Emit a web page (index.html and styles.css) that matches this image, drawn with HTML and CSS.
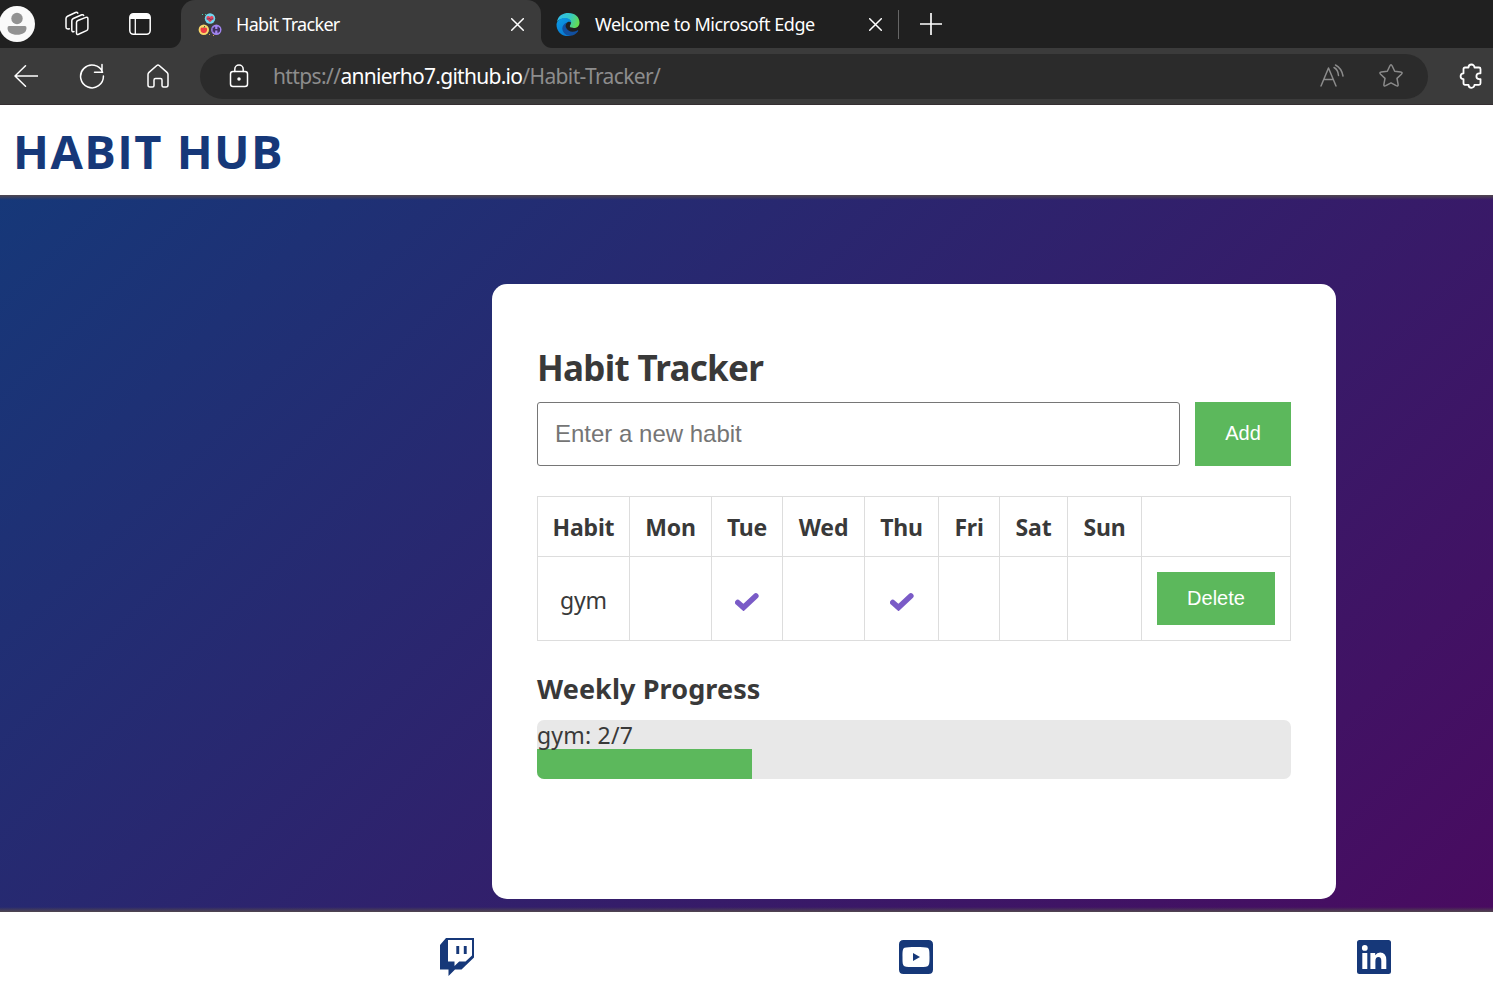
FILE: index.html
```html
<!DOCTYPE html>
<html lang="en">
<head>
<meta charset="utf-8">
<title>Habit Tracker</title>
<link rel="stylesheet" href="styles.css">
</head>
<body>
<div class="tabs">
  <div class="tabs-tools">
    <svg class="avatar" viewBox="0 0 36 36" width="36" height="36"><circle cx="18" cy="18" r="18" fill="#fafafa"/><circle cx="18" cy="12.5" r="5.7" fill="#929292"/><path d="M10 20h16q1.500 0 1.500 2c0 4.500-4 6.800-9.500 6.800S8.500 26.500 8.500 22q0-2 1.500-2z" fill="#929292"/></svg>
    <svg class="workspaces line" viewBox="0 0 26 26" width="26" height="26"><path d="M12.500 11.600q0-1.500 1.400-2.100l8-3.100q2-.7 2 1.400v9.600q0 1.500-1.400 2.200l-8 3.700q-2 .8-2-1.300zM10 20.500q-2.200.8-2.200-1.500V9.800q0-1.500 1.500-2.300l8.500-3.700q1.400-.5 1.900.7M5.300 17.800Q2 18.500 2 16V7.500Q2 6 3.500 5.300l8-3.800q1.600-.6 2.300.7"/></svg>
    <svg class="panel" viewBox="0 0 22 22" width="22" height="22"><rect x=".8" y=".8" width="20.400" height="20.400" rx="3.600" fill="none" stroke="#fff" stroke-width="1.500"/><path d="M1 6V4q0-3 3-3h14q3 0 3 3v2z" fill="#fff"/><path d="M6.300 6v15" stroke="#fff" stroke-width="1.300"/></svg>
  </div>
  <div class="tab tab-active">
    <svg viewBox="0 0 24 24" width="24" height="24"><circle cx="12" cy="6.500" r="5.200" fill="#71d7ef"/><path d="M12 10.300L8.700 7q-.8-3 1.600-3 1 0 1.700 1 .7-1 1.700-1 2.400 0 1.600 3z" fill="#e8435b"/><path d="M8.500 7h2l1-1 1 2 1-1h2" stroke="#52315a" stroke-width=".7" fill="none"/><circle cx="5.800" cy="17.800" r="5.200" fill="#f9d66a"/><path d="M5.800 16q3.500-1.500 3.300 1.700-.5 3.500-3.300 3.300-2.800.2-3.300-3.300Q2.300 14.500 5.800 16z" fill="#ed3b43"/><path d="M5.800 16l1-2" stroke="#47622f"/><circle cx="18.300" cy="17.800" r="5.200" fill="#a184ef"/><path d="M15.300 15.800v4m1.200-5v6m3.600-6v6m1.200-5v4m-4.800-2h3.600" stroke="#40305f" stroke-width="1.400"/><path d="M4 2.500h1m2 0h1" stroke="#42c9ad"/><path d="M11 22.500h1m3 1h1" stroke="#d79846"/></svg>
    <span class="tab-title title-one">Habit Tracker</span>
    <svg class="line close" viewBox="0 0 13 13" width="13" height="13"><path d="M.7.700l11.600 11.600M12.300.7L.7 12.300"/></svg>
  </div>
  <div class="tab tab-other">
    <svg viewBox="0 0 24 24" width="24" height="24"><defs><linearGradient id="eg" x1="0" x2="1" y1=".2" y2=".5"><stop stop-color="#31bdf0"/><stop offset=".55" stop-color="#34c8c5"/><stop offset="1" stop-color="#65dc50"/></linearGradient><linearGradient id="eb" x1="0" x2=".5" y1="0" y2="1"><stop stop-color="#0c9be5"/><stop offset="1" stop-color="#087bd2"/></linearGradient></defs><path d="M1 10C2 3.500 7 1 12.500 1 19 1 23.500 5 23.500 10.500c0 3.700-2.500 5.500-5.700 5.500-3.100 0-4.800-1.100-3.500-2.900C16.500 9.500 13.500 6.500 9 6.500 5 6.500 2.300 7.800 1 10z" fill="url(#eg)"/><path d="M.5 12.500C1 8.500 4.600 6 9 6c3.500 0 6.200 1.900 6.500 5-1-1.300-2.500-1.600-4-.8-2.500 1.400-3.500 4.500-2.500 7.700 1 3 3 5 6 6C7 25.500.5 20.500.5 12.500z" fill="url(#eb)"/><path d="M11 10.500c-4.500 1.800-6 6.200-3.500 9.700 3.500 5 10.500 4.500 14.500-.7.800-1-.2-1.500-1.200-.8-4.300 2-9.300.8-10.800-3.200-.8-2-.3-3.500 1-5z" fill="#1150a0"/></svg>
    <span class="tab-title title-two">Welcome to Microsoft Edge</span>
    <svg class="line close" viewBox="0 0 13 13" width="13" height="13"><path d="M.7.700l11.600 11.600M12.300.7L.7 12.300"/></svg>
  </div>
  <div class="new-tab"><svg class="line" viewBox="0 0 20 20" width="22" height="22"><path d="M10 0v20M0 10h20"/></svg></div>
</div>
<div class="toolbar">
  <svg class="line back" viewBox="0 0 24 22" width="24" height="22"><path d="M11.500.8L1 11l10.500 10.200M1 11h23"/></svg>
  <svg class="line reload" viewBox="0 0 26 26" width="26" height="26"><path d="M23.600 9.200A11.400 11.400 0 1 0 24.400 13M23 1.500v7.700h-7.500"/></svg>
  <svg class="line home" viewBox="0 0 24 24" width="24" height="24"><path d="M2 10.500Q2 9.300 3 8.400L10.800 1.500q1.200-1 2.400 0L21 8.400q1 .9 1 2.100V21q0 2-2 2h-2.500q-1.500 0-1.500-1.500V16q0-1.500-1.500-1.500h-5Q8 14.500 8 16v5.500Q8 23 6.500 23H4q-2 0-2-2z"/></svg>
  <div class="address">
    <svg class="line lock" viewBox="0 0 20 24" width="20" height="24"><rect x="1.500" y="7.500" width="17" height="15" rx="2.500"/><path d="M5.800 7.500V5.200a4.200 4.200 0 0 1 8.400 0v2.300"/><circle cx="10" cy="15" r="1" fill="#fff"/></svg>
    <div class="url"><span class="url-scheme">https://</span><span class="url-host">annierho7.github.io</span><span class="url-path">/Habit-Tracker/</span></div>
    <svg class="muted" viewBox="0 0 24 24" width="24" height="24"><path d="M1 22L8.500 4 16 22M4 15.500h9M14 3.500q4 2 4.500 8M15.500 1q6 3 7.500 11"/></svg>
    <svg class="muted star" viewBox="0 0 26 26" width="26" height="26"><path d="M11.800 3q1.200-2.400 2.400 0l2.500 5.300 6 .8q2.400.4.700 2.200L19 15.400l1.100 6q.3 2.400-1.900 1.300L13 19.900l-5.200 2.800q-2.200 1.100-1.900-1.300l1.100-6-4.400-4.100q-1.700-1.800.7-2.200l6-.8z"/></svg>
  </div>
  <svg class="line puzzle" viewBox="0 0 24 26" width="24" height="26"><path d="M9.500 4.500a3 3 0 0 1 6 0H20q1.500 0 1.500 1.500v4.300h-1.200a2.900 2.900 0 0 0 0 5.800h1.200v4.200q0 1.500-1.500 1.500h-4.500a3 3 0 0 1-6 0H6q-1.500 0-1.500-1.500v-4.200a2.900 2.900 0 0 1 0-5.800V6Q4.500 4.500 6 4.500z"/></svg>
</div>
<header class="site-header"><h1 class="brand">HABIT HUB</h1></header>
<main class="main">
  <section class="card">
    <h2 class="heading">Habit Tracker</h2>
    <form class="habit-form">
      <input class="habit-input" type="text" placeholder="Enter a new habit">
      <button class="button add" type="button">Add</button>
    </form>
    <table class="habits">
      <colgroup><col class="c-habit"><col class="c-mon"><col class="c-tue"><col class="c-wed"><col class="c-thu"><col class="c-fri"><col class="c-sat"><col class="c-sun"><col class="c-action"></colgroup>
      <thead><tr><th>Habit</th><th>Mon</th><th>Tue</th><th>Wed</th><th>Thu</th><th>Fri</th><th>Sat</th><th>Sun</th><th></th></tr></thead>
      <tbody><tr><td class="name">gym</td><td></td><td><svg class="check" viewBox="0 0 24 18" width="24" height="18"><path d="M2.800 9.500l5.700 5L20.800 3"/></svg></td><td></td><td><svg class="check" viewBox="0 0 24 18" width="24" height="18"><path d="M2.800 9.500l5.700 5L20.800 3"/></svg></td><td></td><td></td><td></td><td><button class="button delete" type="button">Delete</button></td></tr></tbody>
    </table>
    <h3 class="subheading">Weekly Progress</h3>
    <div class="progress"><div class="progress-label">gym: 2/7</div><div class="progress-fill" style="width:28.5714%"></div></div>
  </section>
</main>
<footer class="footer">
  <svg class="twitch" viewBox="0 0 36 38" width="36" height="38"><path fill-rule="evenodd" d="M7 0h28v19.500L22.500 31.500H16L9.500 38v-6.500H1V7zm2 2v21.500h6.500V28l4.700-4.500h6.300L33 17.500V2zM17.300 8h2.900v8h-2.900zm7.500 0h2.900v8h-2.900z"/></svg>
  <svg class="youtube" viewBox="0 0 34 34" width="34" height="34"><path fill-rule="evenodd" d="M4.500 0h25Q34 0 34 4.500v25q0 4.500-4.500 4.500h-25Q0 34 0 29.500v-25Q0 0 4.500 0zM17 7C11 7 7 7.100 5.500 7.800 3.500 8.700 3.500 12 3.500 17s0 8.300 2 9.200C7 26.900 11 27 17 27s10-.1 11.500-.8c2-.9 2-4.200 2-9.200s0-8.300-2-9.200C27 7.100 23 7 17 7z"/><path d="M14 13l7 4-7 4z"/></svg>
  <svg class="linkedin" viewBox="0 0 34 34" width="34" height="34"><path fill-rule="evenodd" d="M2.500 0h29Q34 0 34 2.500v29q0 2.500-2.500 2.500h-29Q0 34 0 31.500v-29Q0 0 2.500 0zM5.300 13v16h5V13zm2.500-8a2.900 2.900 0 1 0 0 5.800 2.900 2.900 0 0 0 0-5.800zm5.600 8v16h5v-8q0-4 3-4t2.900 4v8h5v-9q0-7.500-6.200-7.500-3.200 0-4.900 2.700V13z"/></svg>
</footer>
</body>
</html>
```
FILE: styles.css
```css
* { box-sizing: border-box; }
body { margin: 0; height: 999px; display: flex; flex-direction: column; overflow: hidden; background: #fff; color: #393939; font-family: "Noto Sans", sans-serif; }
svg { display: block; flex: none; }
h1, h2, h3 { margin: 0; white-space: nowrap; }
.line { fill: none; stroke: #fff; stroke-width: 1.500; stroke-linejoin: round; stroke-linecap: round; }

.tabs { height: 48px; flex: none; display: flex; background: linear-gradient(#202020 0 30px, #3b3b3b 30px 48px) 0 0 / 560px 48px no-repeat, #202020; color: #fff; }
.tabs-tools { width: 181px; display: flex; align-items: center; background: #202020; border-radius: 0 0 11px 0; }
.avatar { margin-left: -1px; }
.workspaces { margin-left: 29px; }
.panel { margin-left: 39px; }
.tab { display: flex; align-items: center; height: 48px; }
.tab-active { width: 360px; padding: 0 17px; border-radius: 14px 14px 0 0; background: #3b3b3b; }
.tab-other { width: 357px; padding: 0 16px 0 15px; background: #202020; border-radius: 0 0 0 11px; }
.tab-title { font-size: 18px; line-height: 24px; white-space: nowrap; }
.title-one { margin-left: 14px; letter-spacing: -.68px; }
.title-two { margin-left: 15px; letter-spacing: -.46px; }
.close { margin-left: auto; }
.new-tab { flex: 1; display: flex; align-items: center; background: linear-gradient(#666, #666) 0 10px / 1px 29px no-repeat #202020; padding-left: 22px; }

.toolbar { height: 57px; flex: none; display: flex; align-items: center; background: #3b3b3b; border-bottom: 1px solid #342e31; }
.back { margin-left: 14px; }
.reload { margin-left: 41px; }
.home { margin-left: 41px; }
.address { width: 1228px; height: 45px; margin-left: 30px; padding: 0 24px 0 29px; display: flex; align-items: center; border-radius: 23px; background: #2b2b2b; }
.url { margin-left: 24px; flex: 1; display: flex; font-size: 21px; line-height: 30px; white-space: nowrap; color: #8d8d8d; letter-spacing: -.62px; }
.url-host { color: #fff; letter-spacing: -.72px; }
.muted { fill: none; stroke: #8b8b8b; stroke-width: 1.500; stroke-linejoin: round; stroke-linecap: round; }
.star { margin-left: 34px; }
.puzzle { margin-left: 31px; stroke-width: 1.800; }

.site-header { height: 90px; flex: none; padding: 10px 13px; background: #fff; }
.brand { color: #163879; font-family: "Open Sans", sans-serif; font-size: 47px; line-height: 73px; letter-spacing: 1.450px; }
.main { height: 717px; flex: none; padding: 89px 0 0 492px; background: linear-gradient(#51474e, rgba(81,71,78,0)) 0 0 / 100% 5px no-repeat, linear-gradient(rgba(81,71,78,0), #51474e) 0 100% / 100% 5px no-repeat, linear-gradient(135deg, #163879, #490b60); }
.card { width: 844px; height: 615px; padding: 62px 45px 0; border-radius: 15px; background: #fff; }
.heading { height: 56px; font-size: 35px; line-height: 44px; letter-spacing: -.7px; }
.habit-form { display: flex; gap: 15px; height: 64px; margin-bottom: 30px; }
.habit-input { width: 643px; padding: 0 17px; border: 1px solid #767676; border-radius: 3px; background: #fff; font: 24px "Liberation Sans", Arial, sans-serif; }
.habit-input::placeholder { color: #757575; }
.button { display: block; padding: 0; border: 0; background: #5cb85c; color: #fff; font: 20px "Liberation Sans", Arial, sans-serif; }
.add { width: 96px; height: 64px; padding-bottom: 2px; }
.delete { width: 118px; height: 53px; margin: auto; padding-bottom: 1px; }
.habits { width: 754px; table-layout: fixed; border-collapse: collapse; text-align: center; font-size: 24px; }
.habits th, .habits td { padding: 0; border: 1px solid #ddd; }
.habits th { height: 60px; font-size: 23px; line-height: 32px; padding-top: 1px; letter-spacing: -.2px; }
.habits td { height: 84px; }
.habits .name { padding-top: 2px; font-size: 23px; letter-spacing: -.2px; }
.c-habit { width: 92px; }
.c-mon, .c-wed { width: 82px; }
.c-tue { width: 71px; }
.c-thu, .c-sun { width: 74px; }
.c-fri { width: 61px; }
.c-sat { width: 68px; }
.c-action { width: 149px; }
.check { margin: 7px auto 0; fill: none; stroke: #7a5bc7; stroke-width: 5.600; stroke-linecap: round; }
.subheading { margin: 29px 0 12px; font-size: 27px; line-height: 38px; letter-spacing: .1px; }
.progress { height: 59px; overflow: hidden; border-radius: 7px; background: #e8e8e8; }
.progress-label { height: 29px; font-size: 23px; line-height: 31px; letter-spacing: .2px; }
.progress-fill { height: 30px; background: #5cb85c; }
.footer { height: 87px; flex: none; padding: 2px 102.500px 0 438.500px; display: flex; align-items: center; justify-content: space-between; background: #fff; fill: #163879; }
```
